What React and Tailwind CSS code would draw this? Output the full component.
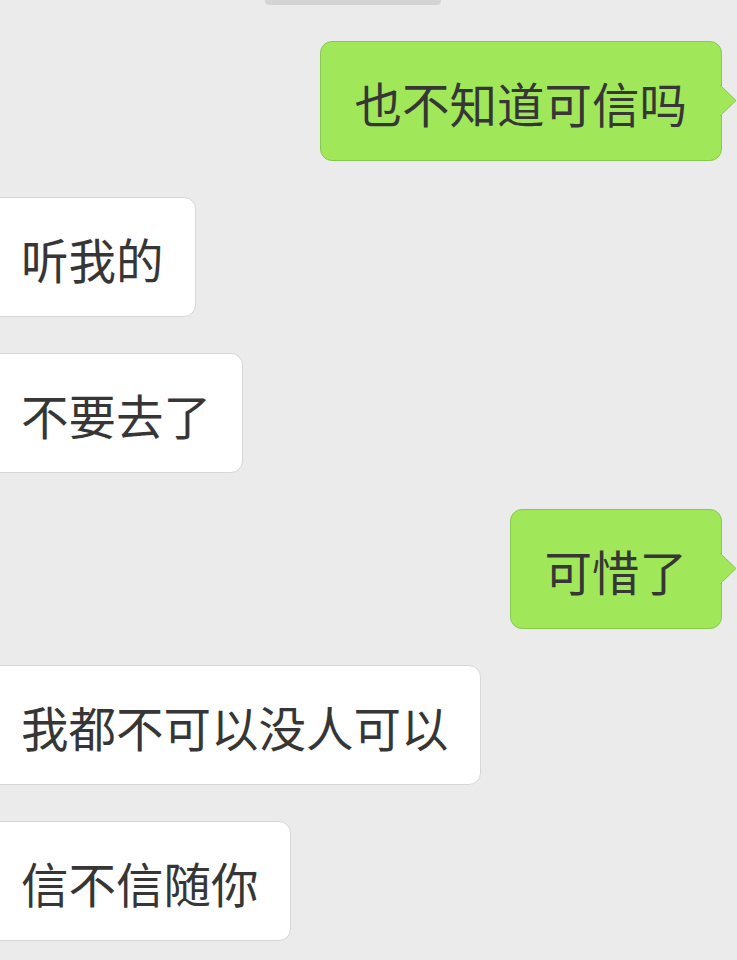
import React from 'react';

const MESSAGES = [
  { from: 'me', text: '也不知道可信吗' },
  { from: 'them', text: '听我的' },
  { from: 'them', text: '不要去了' },
  { from: 'me', text: '可惜了' },
  { from: 'them', text: '我都不可以没人可以' },
  { from: 'them', text: '信不信随你' },
];

const FONT = { fontFamily: '"Noto Sans CJK SC", "Noto Sans", sans-serif' };

function Bubble({ from, text }) {
  if (from === 'me') {
    return (
      <div className="flex justify-end pr-[15px]">
        <div className="relative flex h-[120px] items-center rounded-[12px] border border-[#86c94f] bg-[#a0e75a] pl-[34px] pr-[34px] pt-[3px] text-[47.5px] leading-none text-[#363636]">
          <span>{text}</span>
          {/* tail pointing right */}
          <svg
            className="absolute right-[-16px] top-1/2 -translate-y-1/2"
            width="17"
            height="32"
            viewBox="0 0 17 32"
          >
            <path d="M0 0 L16 15.5 L0 31 Z" fill="#a0e75a" />
            <path d="M0 0 L16 15.5 L0 31" fill="none" stroke="#86c94f" strokeWidth="1" />
            <rect x="0" y="1" width="1.5" height="29" fill="#a0e75a" />
          </svg>
        </div>
      </div>
    );
  }
  return (
    <div className="flex justify-start">
      <div className="ml-[-12px] flex h-[120px] items-center rounded-[12px] border border-[#d6d6d6] bg-white pl-[32px] pr-[31px] pt-[3px] text-[47.5px] leading-none text-[#363636]">
        <span>{text}</span>
      </div>
    </div>
  );
}

export default function App() {
  return (
    <div className="h-[960px] w-[737px] overflow-hidden bg-[#ebebeb]" style={FONT}>
      <div className="flex flex-col gap-[36px]">
        <div className="ml-[265px] h-[5px] w-[176px] rounded-b-[4px] bg-[#d4d4d4]" />
        {MESSAGES.map((m, i) => (
          <Bubble key={i} {...m} />
        ))}
      </div>
    </div>
  );
}
